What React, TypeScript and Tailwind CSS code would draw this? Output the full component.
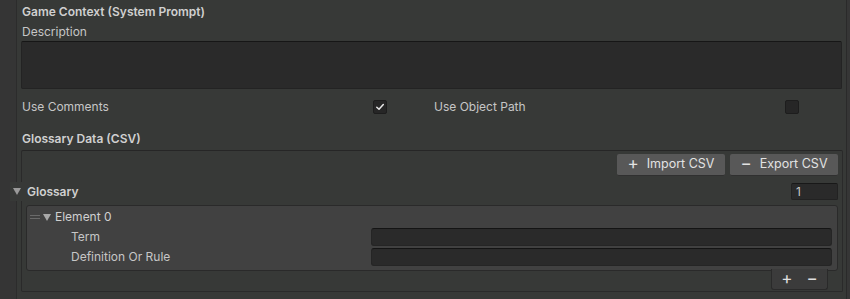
import React from "react";

function Check({ checked }: { checked: boolean }) {
  return (
    <div className="w-[14px] h-[14px] rounded-[2px] bg-[#262626] border border-[#1d1d1d] flex items-center justify-center">
      {checked && (
        <svg width="10" height="10" viewBox="0 0 10 10">
          <path d="M1.8 5.2 L4 7.3 L8.3 2.6" stroke="#e8e8e8" strokeWidth="1.5" fill="none" strokeLinecap="round" strokeLinejoin="round" />
        </svg>
      )}
    </div>
  );
}

function Tri({ color = "#9a9a9a" }: { color?: string }) {
  return (
    <svg width="8" height="7" viewBox="0 0 8 7">
      <path d="M0 0 L8 0 L4 7 Z" fill={color} />
    </svg>
  );
}

export default function App() {
  return (
    <div className="w-[850px] h-[299px] flex bg-[#363636] overflow-hidden font-['Inter',sans-serif] text-[12px] text-[#c6c6c6]">
      <div className="w-[17px] shrink-0 border-r border-[#2c2c2c] bg-[#353535]" />
      <div className="w-[830px] shrink-0 bg-[#373937] border-r border-[#2a2a2a] pl-[4px] flex flex-col">
        <div className="mt-[3px] h-[18px] leading-[18px] pl-[1px] font-semibold text-[#d0d0d0]">Game Context (System Prompt)</div>
        <div className="mt-[2px] h-[18px] leading-[18px] pl-[1px]">Description</div>
        <div className="w-[821px] h-[48px] bg-[#2a2a2a] border border-[#232323] border-t-[#161616] rounded-[2px]" />
        <div className="mt-[9px] h-[18px] flex items-center pl-[1px]">
          <div className="w-[351px]">Use Comments</div>
          <Check checked />
          <div className="ml-[47px] w-[351px]">Use Object Path</div>
          <Check checked={false} />
        </div>
        <div className="mt-[14px] h-[18px] leading-[18px] pl-[1px] font-semibold text-[#d0d0d0]">Glossary Data (CSV)</div>
        <div className="mt-[2px] w-[822px] h-[142px] border border-[#2a2a2a] border-t-[#262626] rounded-[2px] flex flex-col">
          <div className="mt-[3px] flex justify-end gap-[5px] pr-[4px]">
            <button className="w-[108px] h-[22px] bg-[#585858] rounded-[2px] text-[#e2e2e2] text-[12.5px] flex items-center justify-center gap-[8px] border-b border-[#303030]">
              <span className="text-[17px] leading-none -mt-[2px]">+</span>
              <span>Import CSV</span>
            </button>
            <button className="w-[108px] h-[22px] bg-[#585858] rounded-[2px] text-[#e2e2e2] text-[12.5px] flex items-center justify-center gap-[8px] border-b border-[#303030]">
              <span className="text-[17px] leading-none -mt-[2px]">−</span>
              <span>Export CSV</span>
            </button>
          </div>
          <div className="mt-[6px] h-[19px] -ml-[12px] bg-[#373937] flex items-center pl-[3px] pr-[4px] relative">
            <Tri />
            <span className="ml-[6px] font-semibold text-[#d0d0d0]">Glossary</span>
            <div className="ml-auto w-[47px] h-[17px] bg-[#2a2a2a] border border-[#222] border-t-[#181818] rounded-[2px] text-[12px] leading-[15px] pl-[4px] text-[#c8c8c8]">1</div>
          </div>
          <div className="mt-[4px] ml-[4px] w-[812px] h-[66px] bg-[#414141] border border-[#2a2a2a] rounded-[3px] flex flex-col pt-[2px]">
            <div className="h-[18px] flex items-center pl-[3px]">
              <div className="w-[10px] flex flex-col gap-[2px]">
                <div className="h-px bg-[#6a6a6a]" />
                <div className="h-px bg-[#6a6a6a]" />
              </div>
              <div className="ml-[3px]"><Tri color="#a8a8a8" /></div>
              <span className="ml-[4px] text-[#d0d0d0]">Element 0</span>
            </div>
            <div className="mt-[2px] h-[18px] flex items-center">
              <span className="pl-[44px] w-[344px]">Term</span>
              <div className="w-[461px] h-[18px] bg-[#2a2a2a] border border-[#252525] border-t-[#141414] rounded-[3px]" />
            </div>
            <div className="mt-[2px] h-[18px] flex items-center">
              <span className="pl-[44px] w-[344px]">Definition Or Rule</span>
              <div className="w-[461px] h-[18px] bg-[#2a2a2a] border border-[#252525] border-t-[#141414] rounded-[3px]" />
            </div>
          </div>
          <div className="-mt-[2px] ml-[749px] w-[57px] h-[21px] bg-[#3b3b3b] border border-[#2a2a2a] border-t-0 rounded-b-[3px] flex items-center justify-center gap-[14px] text-[#e0e0e0] text-[17px] leading-none relative">
            <span className="-mt-[2px]">+</span>
            <span className="-mt-[2px]">−</span>
          </div>
        </div>
      </div>
      <div className="flex-1 bg-[#363636]" />
    </div>
  );
}
